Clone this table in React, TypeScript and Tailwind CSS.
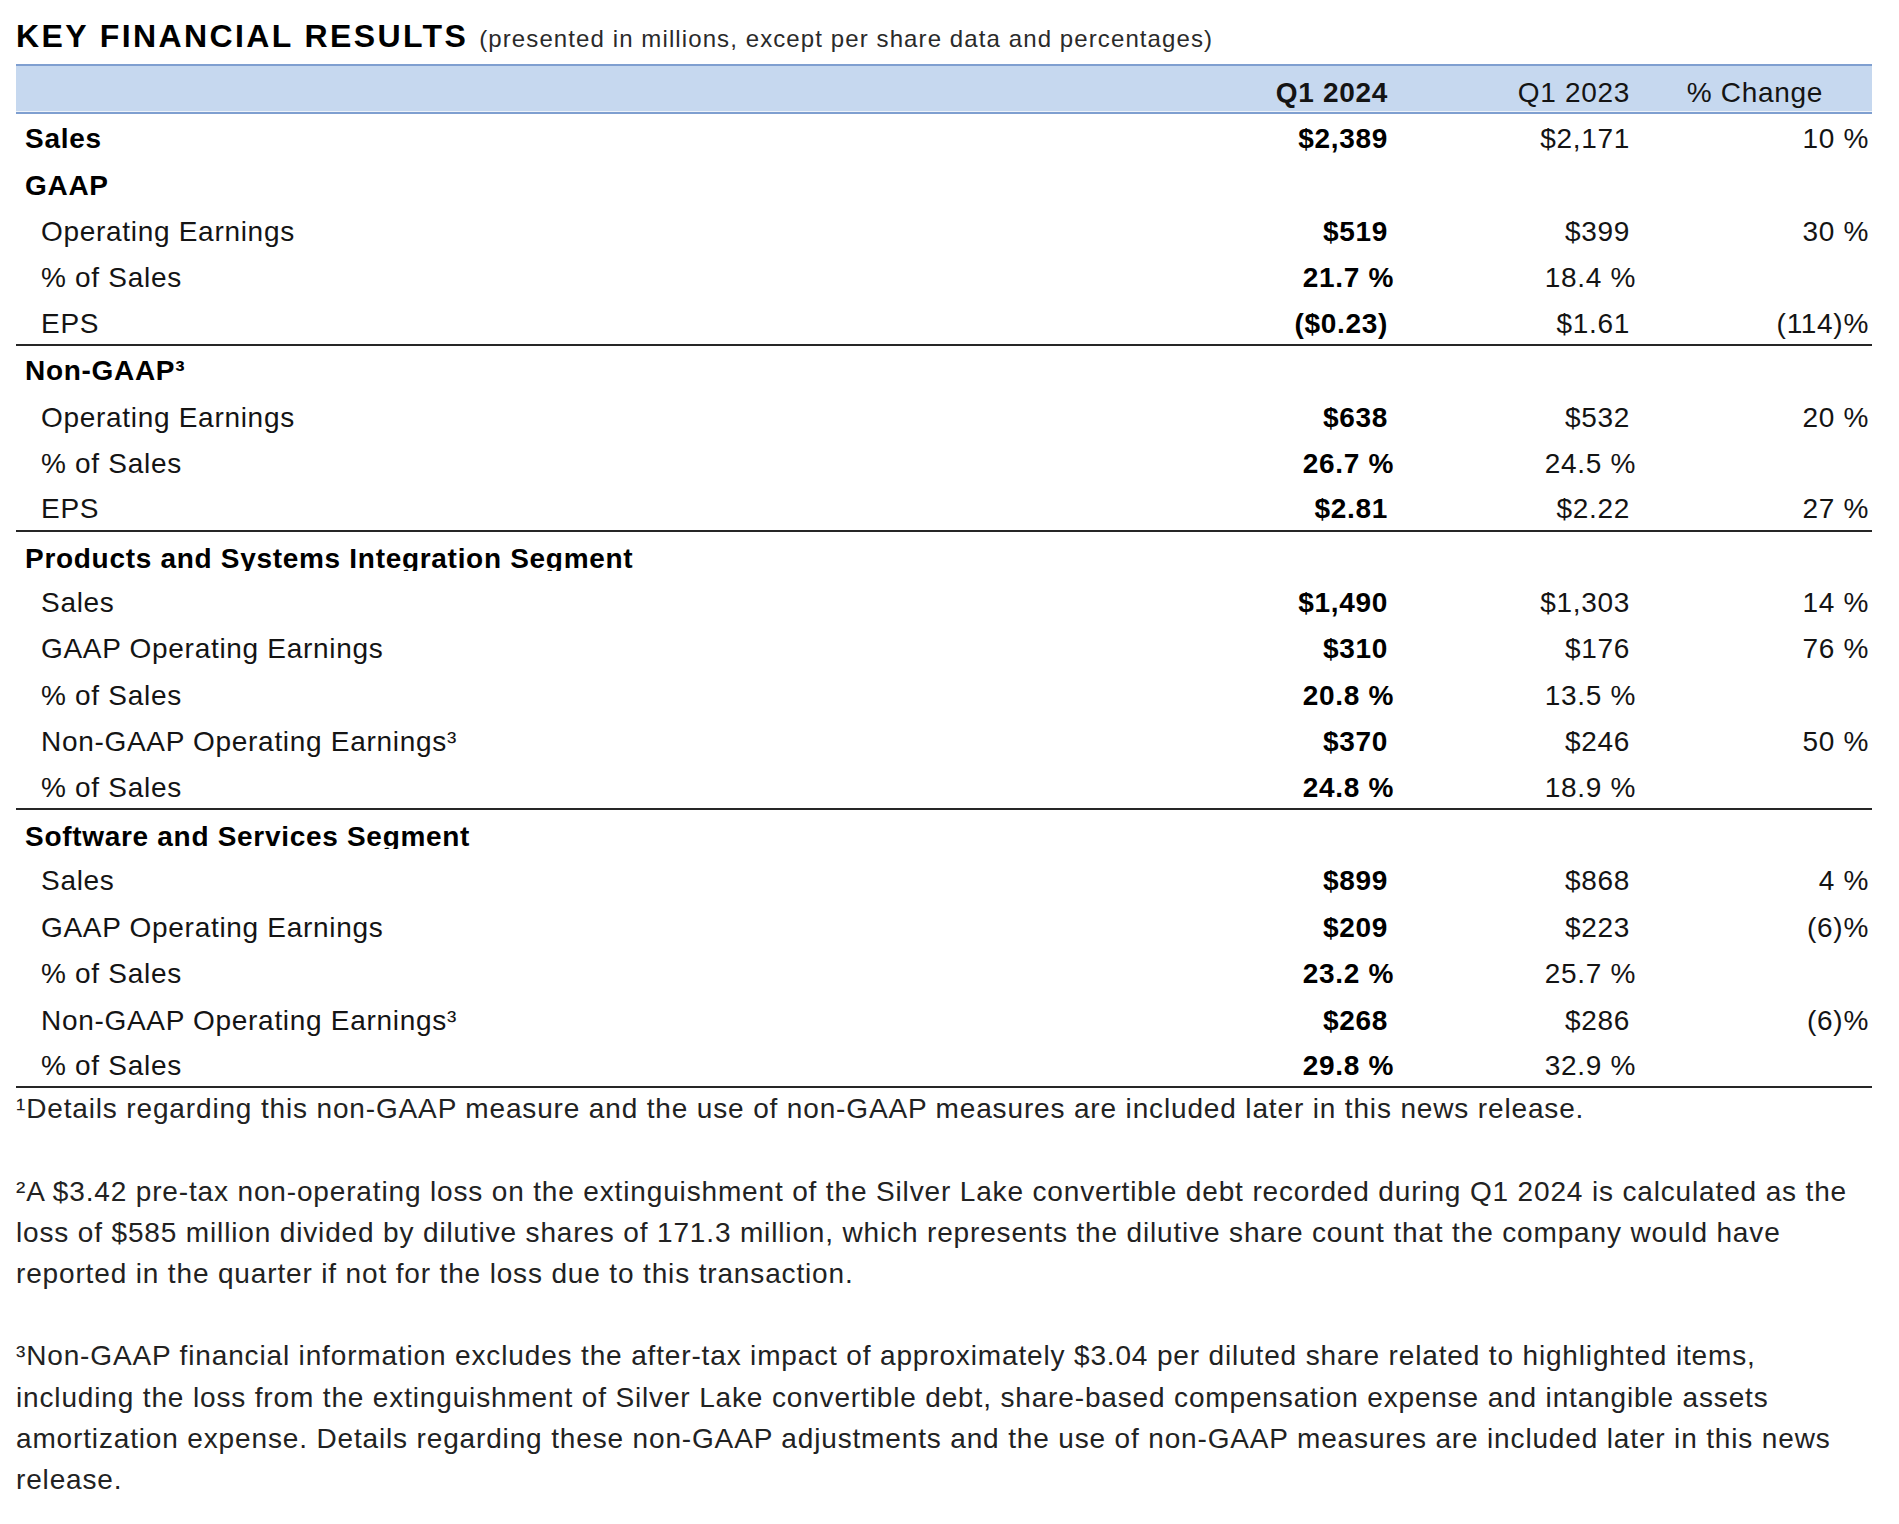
import clsx from "clsx";

type Row = {
  label: string;
  head?: boolean;
  clip?: boolean;
  a?: string;
  b?: string;
  c?: string;
  line?: boolean;
};

const ROWS: Row[] = [
  { label: "Sales", head: true, a: "$2,389", b: "$2,171", c: "10 %" },
  { label: "GAAP", head: true },
  { label: "Operating Earnings", a: "$519", b: "$399", c: "30 %" },
  { label: "% of Sales", a: "21.7 %", b: "18.4 %" },
  { label: "EPS", a: "($0.23)", b: "$1.61", c: "(114)%", line: true },
  { label: "Non-GAAP³", head: true },
  { label: "Operating Earnings", a: "$638", b: "$532", c: "20 %" },
  { label: "% of Sales", a: "26.7 %", b: "24.5 %" },
  { label: "EPS", a: "$2.81", b: "$2.22", c: "27 %", line: true },
  { label: "Products and Systems Integration Segment", head: true, clip: true },
  { label: "Sales", a: "$1,490", b: "$1,303", c: "14 %" },
  { label: "GAAP Operating Earnings", a: "$310", b: "$176", c: "76 %" },
  { label: "% of Sales", a: "20.8 %", b: "13.5 %" },
  { label: "Non-GAAP Operating Earnings³", a: "$370", b: "$246", c: "50 %" },
  { label: "% of Sales", a: "24.8 %", b: "18.9 %", line: true },
  { label: "Software and Services Segment", head: true, clip: true },
  { label: "Sales", a: "$899", b: "$868", c: "4 %" },
  { label: "GAAP Operating Earnings", a: "$209", b: "$223", c: "(6)%" },
  { label: "% of Sales", a: "23.2 %", b: "25.7 %" },
  { label: "Non-GAAP Operating Earnings³", a: "$268", b: "$286", c: "(6)%" },
  { label: "% of Sales", a: "29.8 %", b: "32.9 %", line: true },
];

const NOTES: string[][] = [
  ["¹Details regarding this non-GAAP measure and the use of non-GAAP measures are included later in this news release."],
  [
    "²A $3.42 pre-tax non-operating loss on the extinguishment of the Silver Lake convertible debt recorded during Q1 2024 is calculated as the",
    "loss of $585 million divided by dilutive shares of 171.3 million, which represents the dilutive share count that the company would have",
    "reported in the quarter if not for the loss due to this transaction.",
  ],
  [
    "³Non-GAAP financial information excludes the after-tax impact of approximately $3.04 per diluted share related to highlighted items,",
    "including the loss from the extinguishment of Silver Lake convertible debt, share-based compensation expense and intangible assets",
    "amortization expense. Details regarding these non-GAAP adjustments and the use of non-GAAP measures are included later in this news",
    "release.",
  ],
];

// percent cells in the two quarter columns hang a few px past the $ values
const Val = ({ v }: { v?: string }) =>
  v ? <span className={clsx("inline-block", v.endsWith(" %") && "-mr-[6px]")}>{v}</span> : null;

const App = () => {
  return (
    <div className="w-[1899px] min-h-[1524px] bg-white pl-[16px] pr-[27px] font-['Liberation_Sans',Arial,sans-serif] text-[#141414]">
      <div className="flex items-baseline pt-[16px] leading-[40px]">
        <span className="text-[32px] font-bold tracking-[2.4px] text-black">KEY FINANCIAL RESULTS</span>
        <span className="ml-[11px] text-[24px] tracking-[1.1px] text-[#2a2a2a]">
          (presented in millions, except per share data and percentages)
        </span>
      </div>

      <div className="mt-[5px] text-[28px] tracking-[0.7px]">
        <div className="border-t-2 border-[#7f9fd0] bg-[#c6d8ef]">
          <div className="flex h-[45px] items-center pt-[9px]">
            <div className="flex-1" />
            <div className="w-[200px] text-right font-bold">Q1 2024</div>
            <div className="w-[242px] text-right">Q1 2023</div>
            <div className="w-[242px] pr-[49px] text-right">% Change</div>
          </div>
          <div className="h-px bg-[#eef3fa]" />
          <div className="h-[2px] bg-[#7f9fd0]" />
        </div>

        {ROWS.map((r, i) => (
          <div
            key={i}
            className={clsx(
              "flex h-[46.4px] items-center pt-[4px]",
              r.line && "border-b-2 border-[#262626]"
            )}
          >
            <div className={clsx("flex-1 whitespace-nowrap", r.head ? "pl-[9px] font-bold text-black" : "pl-[25px]")}>
              {r.clip ? (
                <span className="block h-[28px] overflow-hidden leading-[32px]">{r.label}</span>
              ) : (
                r.label
              )}
            </div>
            <div className="w-[200px] text-right font-bold text-black">
              <Val v={r.a} />
            </div>
            <div className="w-[242px] text-right">
              <Val v={r.b} />
            </div>
            <div className="w-[242px] pr-[3px] text-right">{r.c}</div>
          </div>
        ))}
      </div>

      <div className="text-[28px] leading-[41.2px] tracking-[0.85px] text-[#222]">
        {NOTES.map((p, i) => (
          <div key={i} className={clsx(i > 0 && "mt-[41.2px]")}>
            {p.map((l, j) => (
              <span key={j} className="block whitespace-nowrap">
                {l}
              </span>
            ))}
          </div>
        ))}
      </div>
    </div>
  );
};

export default App;
